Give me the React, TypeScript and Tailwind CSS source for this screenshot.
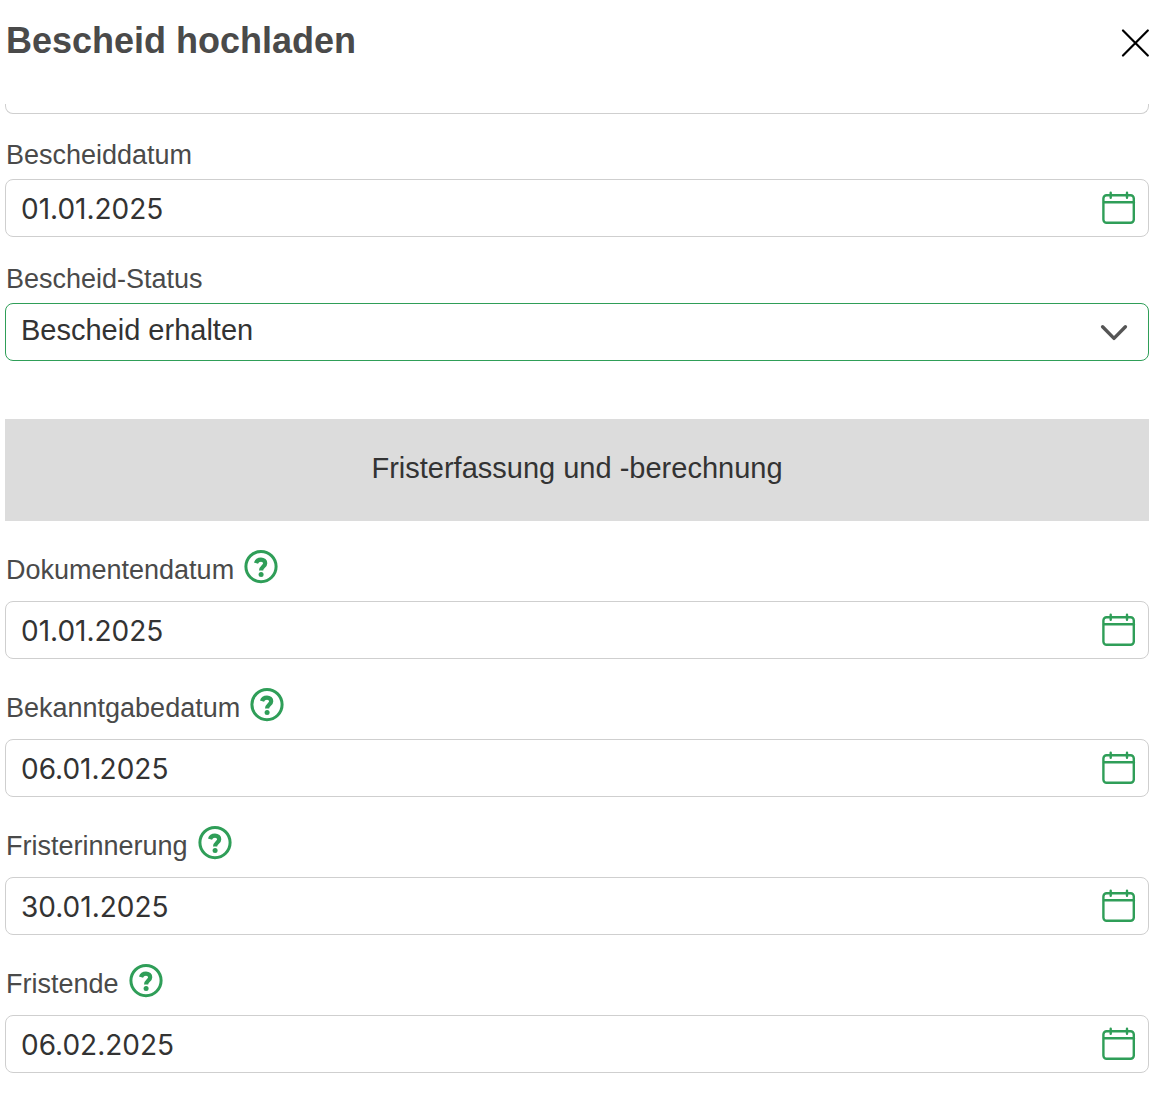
import { useState } from "react";

function CalendarIcon() {
  return (
    <svg width="34" height="34" viewBox="0 0 34 34" fill="none" stroke="#2f9e58" strokeWidth="2.4" strokeLinecap="round" aria-hidden="true">
      <rect x="1.4" y="4.2" width="30.4" height="27.6" rx="3.2" />
      <path d="M2 11.2H32M8.7 1.8V6.8M25 1.8V6.8" />
    </svg>
  );
}

function HelpIcon() {
  return (
    <svg width="34" height="34" viewBox="0 0 34 34" fill="none" aria-hidden="true">
      <circle cx="17" cy="16.6" r="15.1" stroke="#2f9e58" strokeWidth="3" />
      <path d="M12 13.2C12.7 10.8 14.5 9.6 17 9.6C19.6 9.6 21.2 11.2 21.2 13.2C21.2 16.6 17.1 16.4 17.1 20.6" stroke="#2f9e58" strokeWidth="4.2" />
      <circle cx="17.1" cy="24.5" r="2.5" fill="#2f9e58" />
    </svg>
  );
}

function DateInput({ id, initial }: { id: string; initial: string }) {
  const [value, setValue] = useState(initial);
  return (
    <div className="flex h-[58px] items-center rounded-lg border border-[#cfcfcf] bg-white pl-[15px] pr-3">
      <input
        id={id}
        type="text"
        value={value}
        onChange={(e) => setValue(e.target.value)}
        className="h-full min-w-0 flex-1 bg-transparent pt-0.5 font-[Inter,sans-serif] text-[28px] text-[#333] outline-none"
      />
      <button type="button" aria-label="Kalender öffnen">
        <CalendarIcon />
      </button>
    </div>
  );
}

function DeadlineField({ id, label, initial }: { id: string; label: string; initial: string }) {
  return (
    <div className="flex flex-col gap-4">
      <div className="flex h-9 items-center gap-[10px] pl-px">
        <label htmlFor={id} className="pt-1.5 text-[27px] leading-8">{label}</label>
        <button type="button" aria-label={`Hilfe zu ${label}`}>
          <HelpIcon />
        </button>
      </div>
      <DateInput id={id} initial={initial} />
    </div>
  );
}

const deadlines = [
  { id: "dokumentendatum", label: "Dokumentendatum", initial: "01.01.2025" },
  { id: "bekanntgabedatum", label: "Bekanntgabedatum", initial: "06.01.2025" },
  { id: "fristerinnerung", label: "Fristerinnerung", initial: "30.01.2025" },
  { id: "fristende", label: "Fristende", initial: "06.02.2025" },
];

export default function App() {
  return (
    <main className="min-h-screen bg-white pb-7 pl-[5px] pr-[19px] font-['Liberation_Sans',sans-serif] text-[#4a4a4a]">
      <header className="flex h-[104px] items-start justify-between pl-px pt-5">
        <h1 className="text-[36px] font-bold leading-[42px]">Bescheid hochladen</h1>
        <button type="button" aria-label="Schließen" className="pt-2">
          <svg width="28" height="30" viewBox="0 0 28 30" fill="none" stroke="#000" strokeWidth="2.2" strokeLinecap="round" aria-hidden="true">
            <path d="M2 2.5L26.8 27.5M26.8 2.5L2 27.5" />
          </svg>
        </button>
      </header>
      <div className="h-[10px] rounded-b-lg border border-t-0 border-[#cfcfcf]" />
      <div className="mt-6 flex flex-col gap-[7px]">
        <label htmlFor="bescheiddatum" className="pl-px text-[27px] leading-[34px]">Bescheiddatum</label>
        <DateInput id="bescheiddatum" initial="01.01.2025" />
      </div>
      <div className="mt-[25px] flex flex-col gap-[7px]">
        <label htmlFor="status" className="pl-px text-[27px] leading-[34px]">Bescheid-Status</label>
        <div className="relative">
          <select id="status" className="h-[58px] w-full appearance-none rounded-lg border border-[#2f9e58] bg-white pb-0.5 pl-[15px] pr-14 text-[29px] text-[#333] outline-none">
            <option>Bescheid erhalten</option>
          </select>
          <svg className="pointer-events-none absolute right-5 top-5" width="30" height="18" viewBox="0 0 30 18" fill="none" stroke="#555" strokeWidth="3.4" strokeLinecap="round" strokeLinejoin="round" aria-hidden="true">
            <path d="M3.6 3.8L15 15.4L26.4 3.8" />
          </svg>
        </div>
      </div>
      <h2 className="mt-[58px] bg-[#dcdcdc] pb-[34px] pt-[30px] text-center text-[29px] leading-[38px] text-[#333]">Fristerfassung und -berechnung</h2>
      <div className="mt-7 flex flex-col gap-7">
        {deadlines.map((d) => (
          <DeadlineField key={d.id} {...d} />
        ))}
      </div>
    </main>
  );
}
